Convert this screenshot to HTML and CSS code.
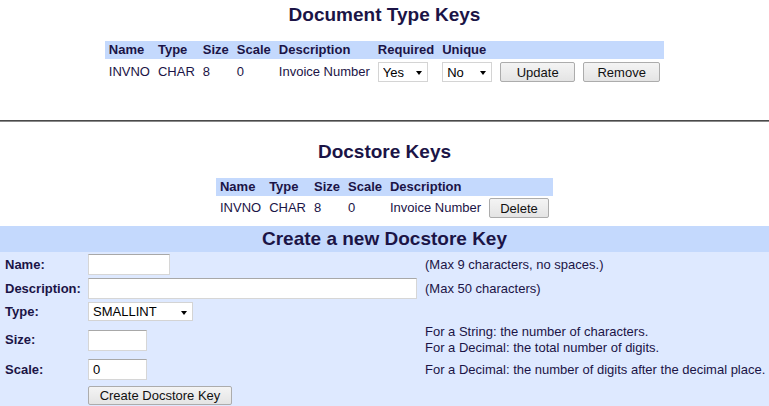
FILE: index.html
```html
<!DOCTYPE html>
<html>
<head>
<meta charset="utf-8">
<title>Docstore Keys</title>
<link rel="stylesheet" href="styles.css">
</head>
<body>
<section class="block block-type">
  <h1 class="title">Document Type Keys</h1>
  <table class="keys">
    <thead>
      <tr><th>Name</th><th>Type</th><th>Size</th><th>Scale</th><th>Description</th><th>Required</th><th>Unique</th><th></th><th></th></tr>
    </thead>
    <tbody>
      <tr>
        <td>INVNO</td><td>CHAR</td><td>8</td><td>0</td><td>Invoice Number</td>
        <td><span class="select-wrap"><select class="sel sel-yn"><option>Yes</option><option>No</option></select></span></td>
        <td><span class="select-wrap"><select class="sel sel-yn"><option>No</option><option>Yes</option></select></span></td>
        <td><button class="btn btn-update">Update</button></td>
        <td><button class="btn btn-remove">Remove</button></td>
      </tr>
    </tbody>
  </table>
</section>
<hr class="divider">
<section class="block block-store">
  <h1 class="title">Docstore Keys</h1>
  <table class="keys">
    <thead>
      <tr><th>Name</th><th>Type</th><th>Size</th><th>Scale</th><th>Description</th><th></th></tr>
    </thead>
    <tbody>
      <tr>
        <td>INVNO</td><td>CHAR</td><td>8</td><td>0</td><td>Invoice Number</td>
        <td><button class="btn btn-delete">Delete</button></td>
      </tr>
    </tbody>
  </table>
</section>
<section class="create">
  <h2 class="create-title">Create a new Docstore Key</h2>
  <form class="form">
    <label class="lbl" for="f-name">Name:</label>
    <div class="field"><input id="f-name" class="inp inp-name" type="text"></div>
    <div class="note">(Max 9 characters, no spaces.)</div>

    <label class="lbl" for="f-desc">Description:</label>
    <div class="field"><input id="f-desc" class="inp inp-desc" type="text"></div>
    <div class="note">(Max 50 characters)</div>

    <label class="lbl" for="f-type">Type:</label>
    <div class="field"><span class="select-wrap"><select id="f-type" class="sel sel-type"><option>SMALLINT</option><option>INTEGER</option><option>CHAR</option><option>DECIMAL</option></select></span></div>
    <div class="note"></div>

    <label class="lbl" for="f-size">Size:</label>
    <div class="field"><input id="f-size" class="inp inp-small" type="text"></div>
    <div class="note">For a String: the number of characters.<br>For a Decimal: the total number of digits.</div>

    <label class="lbl" for="f-scale">Scale:</label>
    <div class="field"><input id="f-scale" class="inp inp-small" type="text" value="0"></div>
    <div class="note">For a Decimal: the number of digits after the decimal place.</div>

    <div class="lbl"></div>
    <div class="field field-submit"><button type="button" class="btn btn-create">Create Docstore Key</button></div>
    <div class="note"></div>
  </form>
</section>
</body>
</html>
```
FILE: styles.css
```css
html, body {
  margin: 0;
  padding: 0;
  background: #ffffff;
}
body {
  font-family: "Liberation Sans", Arial, sans-serif;
  font-size: 13px;
  color: #1b1446;
}
.title {
  margin: 0;
  text-align: center;
  font-size: 19px;
  line-height: 22px;
  font-weight: bold;
}
.block-type .title {
  padding-top: 4px;
  margin-bottom: 15px;
}
.block-store .title {
  margin-top: 19px;
  margin-bottom: 15px;
}
.keys {
  margin: 0 auto;
  border-collapse: collapse;
  border-spacing: 0;
}
.keys th {
  background: #c4d9fd;
  text-align: left;
  font-weight: bold;
  padding: 1px 4px;
  line-height: 16px;
  white-space: nowrap;
}
.keys td {
  padding: 3px 4px 2px;
  line-height: 16px;
  white-space: nowrap;
  vertical-align: middle;
}
.block-store .keys td {
  padding: 2px 4px 2px;
}
.divider {
  margin: 36px 0 0;
  height: 0;
  border: 0;
  border-top: 1px solid #4a4a4a;
  border-bottom: 1px solid #8a8a8a;
}
.select-wrap {
  position: relative;
  display: inline-block;
  vertical-align: middle;
}
.select-wrap::after {
  content: "";
  position: absolute;
  right: 6px;
  top: 50%;
  margin-top: -1px;
  border-left: 3.5px solid transparent;
  border-right: 3.5px solid transparent;
  border-top: 4px solid #000;
  pointer-events: none;
}
.sel {
  -webkit-appearance: none;
  appearance: none;
  display: block;
  margin: 0;
  font-family: "Liberation Sans", Arial, sans-serif;
  font-size: 13px;
  color: #000;
  background: #fff;
  border: 1px solid #d4d4d4;
  border-radius: 0;
  box-sizing: border-box;
  padding: 0 0 0 4px;
}
.sel-yn {
  width: 50px;
  height: 20px;
}
.sel-type {
  width: 105px;
  height: 19px;
}
.btn {
  display: inline-block;
  vertical-align: middle;
  margin: 0;
  box-sizing: border-box;
  font-family: "Liberation Sans", Arial, sans-serif;
  font-size: 13px;
  color: #111;
  background: linear-gradient(#f4f4f4, #e4e4e4);
  border: 1px solid #acacac;
  border-radius: 2px;
  padding: 0 10px;
  height: 20px;
  line-height: 17px;
}
.btn-update { width: 75px; }
.btn-remove { width: 77px; }
.btn-delete { width: 60px; }
.btn-create { width: 144px; height: 19px; }
.create {
  margin-top: 6px;
  background: #dee9ff;
  padding-bottom: 12px;
}
.create-title {
  margin: 0;
  background: #c4d9fd;
  text-align: center;
  font-size: 19px;
  line-height: 26px;
  font-weight: bold;
}
.form {
  margin: 0;
  padding: 2px 0 0 5px;
  display: grid;
  grid-template-columns: 83px 337px 1fr;
  row-gap: 3px;
  align-items: center;
}
.lbl {
  font-weight: bold;
  line-height: 16px;
}
.field {
  display: flex;
  align-items: center;
}
.field-submit {
  padding-top: 3px;
}
.note {
  line-height: 16px;
  white-space: nowrap;
}
.inp {
  margin: 0;
  box-sizing: border-box;
  height: 21px;
  font-family: "Liberation Sans", Arial, sans-serif;
  font-size: 13px;
  color: #000;
  background: #fff;
  border: 1px solid #d6d6d6;
  border-top-color: #a8a8a8;
  padding: 1px 4px;
}
.inp-name { width: 82px; }
.inp-desc { width: 329px; }
.inp-small { width: 59px; }
```
